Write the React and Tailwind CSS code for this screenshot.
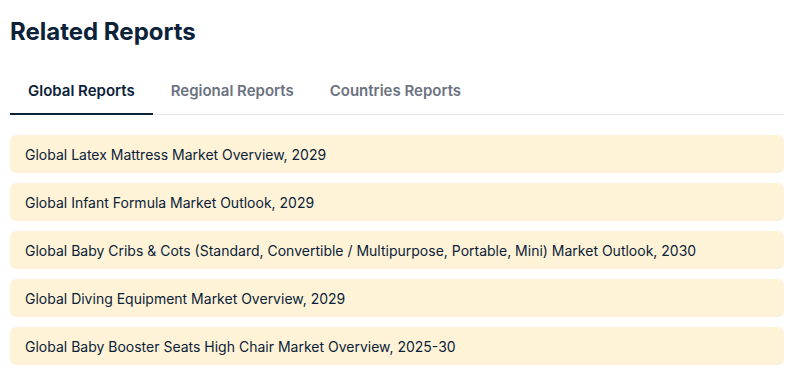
const reports = [
 'Global Latex Mattress Market Overview, 2029',
 'Global Infant Formula Market Outlook, 2029',
 'Global Baby Cribs & Cots (Standard, Convertible / Multipurpose, Portable, Mini) Market Outlook, 2030',
 'Global Diving Equipment Market Overview, 2029',
 'Global Baby Booster Seats High Chair Market Overview, 2025-30',
];

const tabs = ['Global Reports', 'Regional Reports', 'Countries Reports'];

export default function App() {
 return (
  <div className="bg-white pl-[10px] pr-[12px] pt-[16px] font-['Inter',sans-serif] text-[#0b2239]">
   <h2 className="text-[24px] font-bold leading-[32px]">Related Reports</h2>
   <div className="mt-[20px] flex border-b border-[#e5e7eb]">
    {tabs.map((tab, i) => (
     <button
      key={tab}
      className={`-mb-px px-[18px] pt-[12px] pb-[11px] text-[15px] font-semibold leading-[22px] ${
       i === 0 ? 'border-b-2 border-[#0b2239] text-[#0b2239]' : 'border-b-2 border-transparent text-[#6b7280]'
      }`}
     >
      {tab}
     </button>
    ))}
   </div>
   <div className="mt-[20px] flex flex-col gap-[10px]">
    {reports.map((r) => (
     <div key={r} className="flex h-[38px] items-center rounded-[6px] bg-[#fef3d7] px-[15px] text-[14px]">
      {r}
     </div>
    ))}
   </div>
  </div>
 );
}
